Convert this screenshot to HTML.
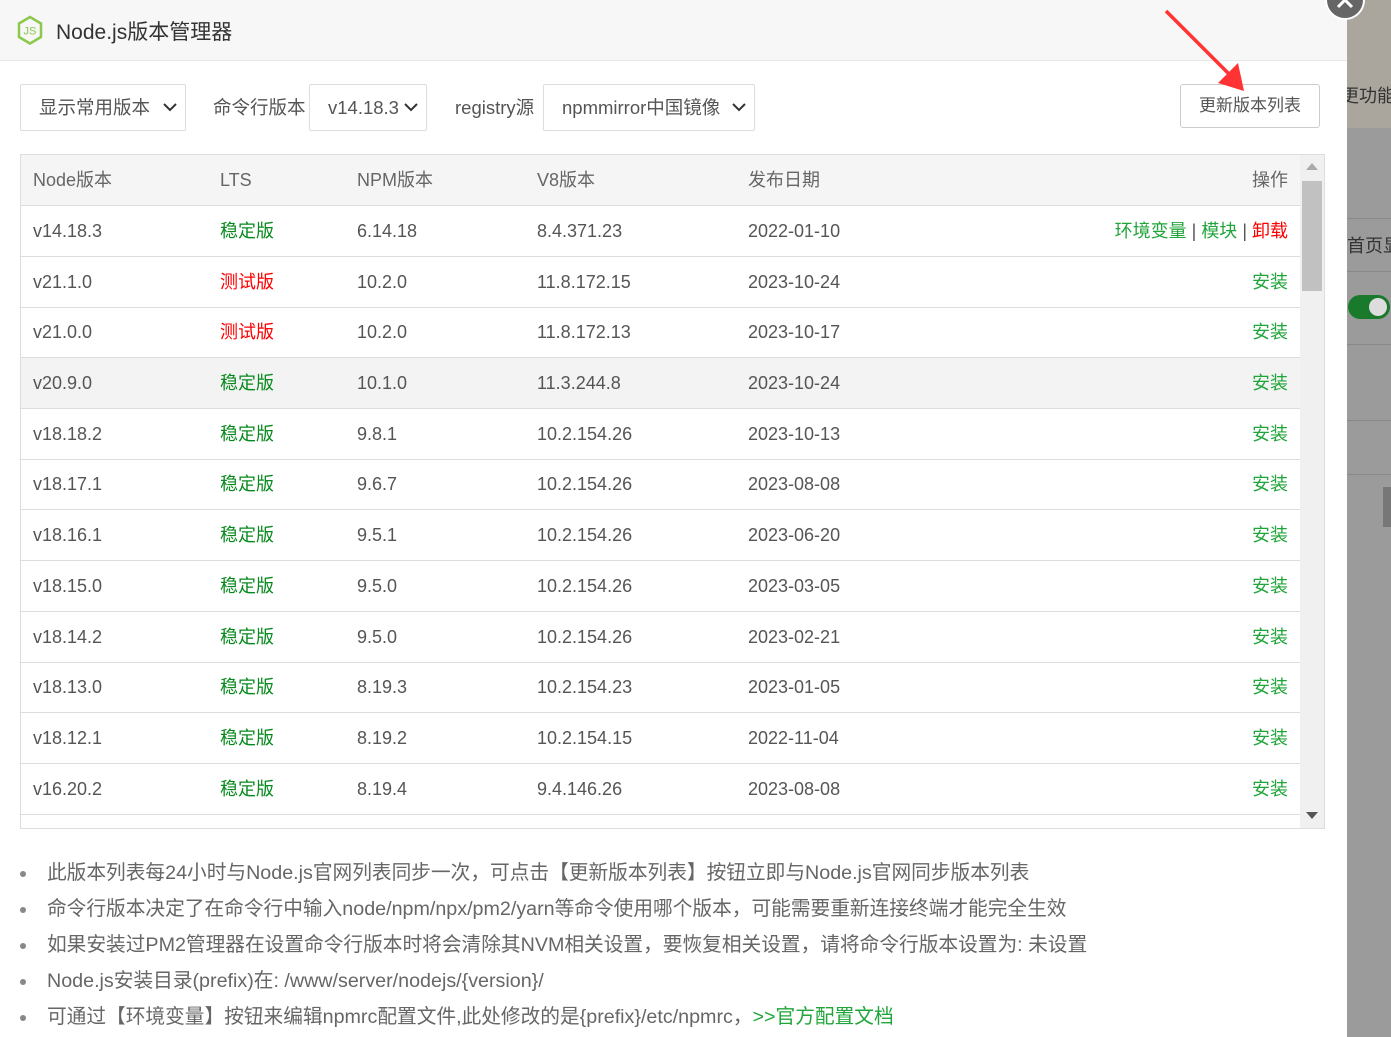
<!DOCTYPE html>
<html><head><meta charset="utf-8"><style>
*{margin:0;padding:0;box-sizing:border-box}
body{width:1391px;height:1037px;overflow:hidden;background:#fff;font-family:"Liberation Sans","Noto Sans CJK SC",sans-serif;color:#555;position:relative}
.bg{position:absolute;left:1347px;top:0;width:44px;height:1037px;background:#9b9b9b;overflow:hidden}
.hdr{position:absolute;left:0;top:0;width:1347px;height:61px;background:#f7f7f7;border-bottom:1px solid #e8e8e8}
.hdr .t{position:absolute;left:56px;top:16px;font-size:21px;color:#333}
.sel{position:absolute;top:84px;height:47px;border:1px solid #ddd;border-radius:2px;font-size:18.5px;color:#555;line-height:45px;padding-left:18px}
.sel svg{position:absolute;right:8px;top:17px}
.lbl{position:absolute;top:84px;line-height:47px;font-size:18.5px;color:#555}
.btn{position:absolute;left:1180px;top:84px;width:140px;height:44px;border:1px solid #ccc;border-radius:3px;font-size:17px;line-height:42px;text-align:center;color:#555}
.tbl{position:absolute;left:20px;top:154px;width:1305px;height:675px;border:1px solid #ddd;overflow:hidden}
.row{position:absolute;left:0;width:1279px;height:51px;border-bottom:1px solid #ddd;font-size:18px;line-height:50px}
.row span{position:absolute;top:0}
.c1{left:12px}.c2{left:199px}.c3{left:336px}.c4{left:516px}.c5{left:727px}.c6{right:12px}
.g{color:#088a1e}.r{color:#f00}.i{color:#20a53a}
.sb{position:absolute;left:1279px;top:0;width:24px;height:673px;background:#f0f0f0}
.notes{position:absolute;left:20px;top:855px;font-size:19.7px;color:#666;white-space:nowrap}
.notes div{height:36px;line-height:36px;position:relative;padding-left:27px}
.notes div:before{content:"";position:absolute;left:0;top:16px;width:6px;height:6px;border-radius:50%;background:#888}
</style></head><body>
<div class="bg">
<div style="position:absolute;left:0;top:0;width:44px;height:128px;background:#aaa69e"></div>
<div style="position:absolute;left:-6px;top:82px;font-size:18px;color:#333;white-space:nowrap">更功能</div>
<div style="position:absolute;left:0;top:218px;width:44px;border-top:1px solid #888"></div>
<div style="position:absolute;left:0;top:232px;font-size:18px;color:#333;white-space:nowrap">首页显</div>
<div style="position:absolute;left:0;top:271px;width:44px;border-top:1px solid #888"></div>
<div style="position:absolute;left:1px;top:295px;width:42px;height:24px;border-radius:12px;background:#1a7a2c"></div>
<div style="position:absolute;left:22px;top:298px;width:18px;height:18px;border-radius:50%;background:#ddd"></div>
<div style="position:absolute;left:0;top:344px;width:44px;border-top:1px solid #888"></div>
<div style="position:absolute;left:0;top:420px;width:44px;border-top:1px solid #888"></div>
<div style="position:absolute;left:0;top:474px;width:44px;border-top:1px solid #888"></div>
<div style="position:absolute;left:36px;top:487px;width:8px;height:40px;background:#777"></div>
</div>
<div class="hdr">
<svg style="position:absolute;left:16px;top:15px" width="28" height="31" viewBox="0 0 28 31"><path d="M14 2 L25 8.5 V22 L14 28.5 L3 22 V8.5 Z" fill="none" stroke="#8cc84b" stroke-width="2.5"/><text x="7.5" y="19.5" font-size="11" font-family="Liberation Sans" fill="#8cc84b">JS</text></svg>
<div class="t">Node.js版本管理器</div>
</div>
<svg style="position:absolute;left:1320px;top:-20px" width="50" height="45"><circle cx="25" cy="20" r="19" fill="#666" stroke="#fff" stroke-width="2"/><path d="M18 13 L32 27 M32 13 L18 27" stroke="#fff" stroke-width="3"/></svg>
<div class="sel" style="left:20px;width:166px">显示常用版本<svg width="14" height="10"><path d="M1 2 L7 8 L13 2" fill="none" stroke="#333" stroke-width="2"/></svg></div>
<div class="lbl" style="left:213px">命令行版本</div>
<div class="sel" style="left:309px;width:118px">v14.18.3<svg width="14" height="10"><path d="M1 2 L7 8 L13 2" fill="none" stroke="#333" stroke-width="2"/></svg></div>
<div class="lbl" style="left:455px">registry源</div>
<div class="sel" style="left:543px;width:212px">npmmirror中国镜像<svg width="14" height="10"><path d="M1 2 L7 8 L13 2" fill="none" stroke="#333" stroke-width="2"/></svg></div>
<div class="btn">更新版本列表</div>
<svg style="position:absolute;left:1160px;top:5px" width="95" height="95"><path d="M6 6 L72 72" stroke="#f33" stroke-width="3.5"/><path d="M58 78 L84 86 L78 58 Z" fill="#f33"/></svg>
<div class="tbl">
<div class="row" style="top:0;background:#f5f5f5;color:#666"><span class="c1">Node版本</span><span class="c2">LTS</span><span class="c3">NPM版本</span><span class="c4">V8版本</span><span class="c5">发布日期</span><span class="c6">操作</span></div>
<div class="row" style="top:51px"><span class="c1">v14.18.3</span><span class="c2 g">稳定版</span><span class="c3">6.14.18</span><span class="c4">8.4.371.23</span><span class="c5">2022-01-10</span><span class="c6"><b class="i" style="font-weight:normal">环境变量</b> | <b class="i" style="font-weight:normal">模块</b> | <b class="r" style="font-weight:normal">卸载</b></span></div>
<div class="row" style="top:102px"><span class="c1">v21.1.0</span><span class="c2 r">测试版</span><span class="c3">10.2.0</span><span class="c4">11.8.172.15</span><span class="c5">2023-10-24</span><span class="c6 i">安装</span></div>
<div class="row" style="top:152px"><span class="c1">v21.0.0</span><span class="c2 r">测试版</span><span class="c3">10.2.0</span><span class="c4">11.8.172.13</span><span class="c5">2023-10-17</span><span class="c6 i">安装</span></div>
<div class="row" style="top:203px;background:#f3f3f3"><span class="c1">v20.9.0</span><span class="c2 g">稳定版</span><span class="c3">10.1.0</span><span class="c4">11.3.244.8</span><span class="c5">2023-10-24</span><span class="c6 i">安装</span></div>
<div class="row" style="top:254px"><span class="c1">v18.18.2</span><span class="c2 g">稳定版</span><span class="c3">9.8.1</span><span class="c4">10.2.154.26</span><span class="c5">2023-10-13</span><span class="c6 i">安装</span></div>
<div class="row" style="top:304px"><span class="c1">v18.17.1</span><span class="c2 g">稳定版</span><span class="c3">9.6.7</span><span class="c4">10.2.154.26</span><span class="c5">2023-08-08</span><span class="c6 i">安装</span></div>
<div class="row" style="top:355px"><span class="c1">v18.16.1</span><span class="c2 g">稳定版</span><span class="c3">9.5.1</span><span class="c4">10.2.154.26</span><span class="c5">2023-06-20</span><span class="c6 i">安装</span></div>
<div class="row" style="top:406px"><span class="c1">v18.15.0</span><span class="c2 g">稳定版</span><span class="c3">9.5.0</span><span class="c4">10.2.154.26</span><span class="c5">2023-03-05</span><span class="c6 i">安装</span></div>
<div class="row" style="top:457px"><span class="c1">v18.14.2</span><span class="c2 g">稳定版</span><span class="c3">9.5.0</span><span class="c4">10.2.154.26</span><span class="c5">2023-02-21</span><span class="c6 i">安装</span></div>
<div class="row" style="top:507px"><span class="c1">v18.13.0</span><span class="c2 g">稳定版</span><span class="c3">8.19.3</span><span class="c4">10.2.154.23</span><span class="c5">2023-01-05</span><span class="c6 i">安装</span></div>
<div class="row" style="top:558px"><span class="c1">v18.12.1</span><span class="c2 g">稳定版</span><span class="c3">8.19.2</span><span class="c4">10.2.154.15</span><span class="c5">2022-11-04</span><span class="c6 i">安装</span></div>
<div class="row" style="top:609px"><span class="c1">v16.20.2</span><span class="c2 g">稳定版</span><span class="c3">8.19.4</span><span class="c4">9.4.146.26</span><span class="c5">2023-08-08</span><span class="c6 i">安装</span></div>
<div class="sb">
<svg style="position:absolute;left:6px;top:8px" width="12" height="7"><path d="M0 7 L6 0 L12 7Z" fill="#aaa"/></svg>
<div style="position:absolute;left:2px;top:26px;width:20px;height:110px;background:#c1c1c1"></div>
<svg style="position:absolute;left:6px;top:657px" width="12" height="7"><path d="M0 0 L6 7 L12 0Z" fill="#555"/></svg>
</div>
</div>
<div class="notes">
<div>此版本列表每24小时与Node.js官网列表同步一次，可点击【更新版本列表】按钮立即与Node.js官网同步版本列表</div>
<div>命令行版本决定了在命令行中输入node/npm/npx/pm2/yarn等命令使用哪个版本，可能需要重新连接终端才能完全生效</div>
<div>如果安装过PM2管理器在设置命令行版本时将会清除其NVM相关设置，要恢复相关设置，请将命令行版本设置为: 未设置</div>
<div>Node.js安装目录(prefix)在: /www/server/nodejs/{version}/</div>
<div>可通过【环境变量】按钮来编辑npmrc配置文件,此处修改的是{prefix}/etc/npmrc，<span style="color:#20a53a">&gt;&gt;官方配置文档</span></div>
</div>
</body></html>
